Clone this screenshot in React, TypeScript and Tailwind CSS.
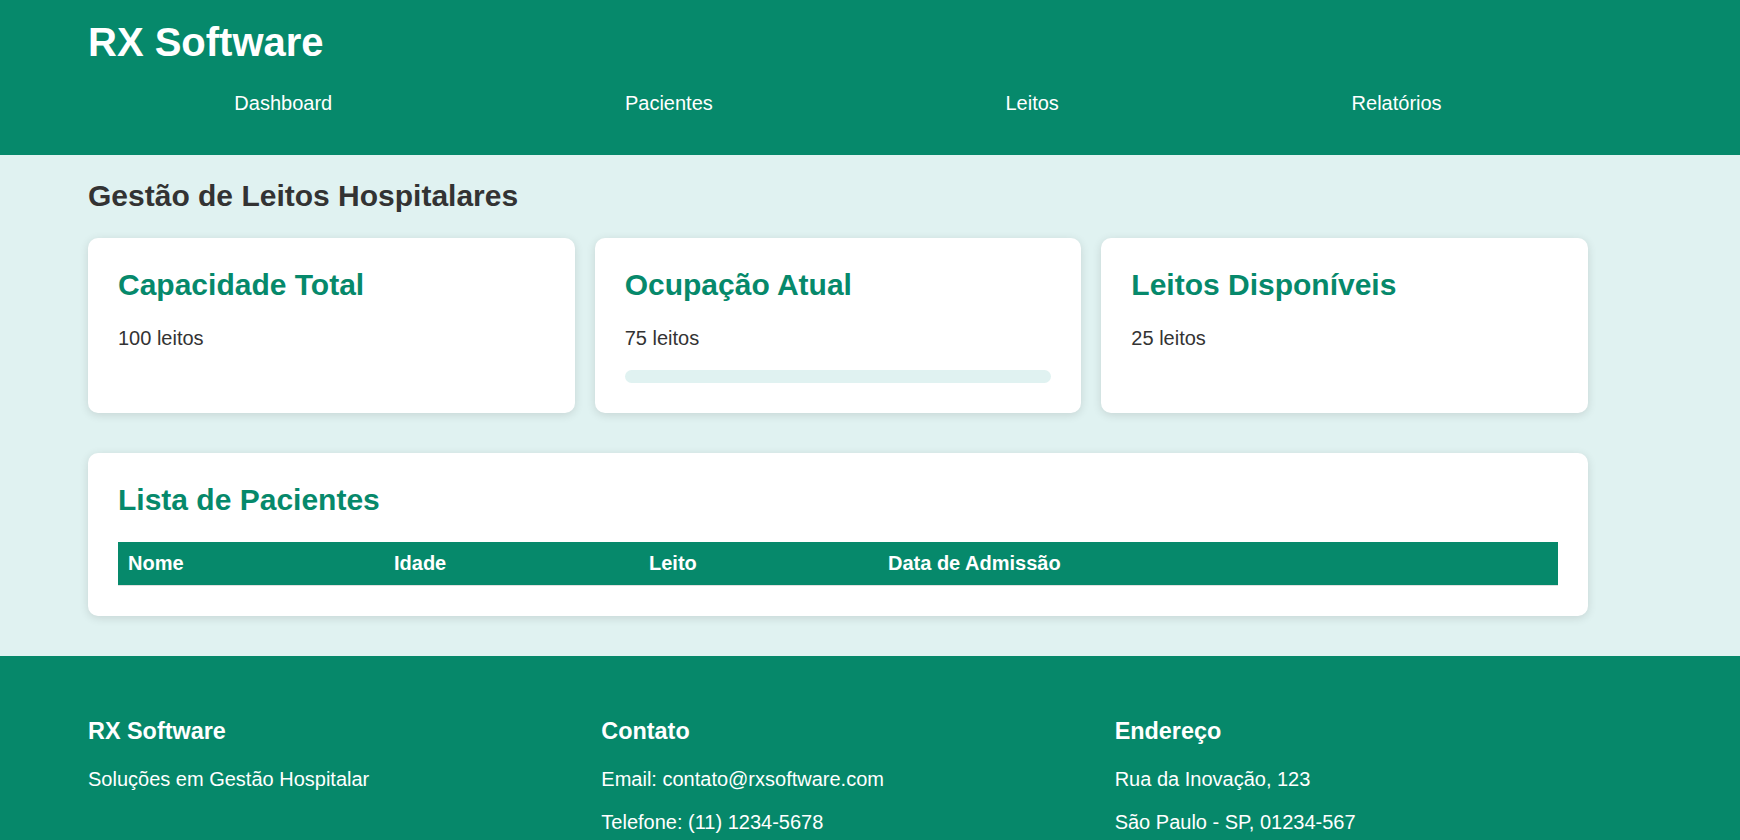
import React from 'react';

const GREEN = 'text-[#06896b]';

function StatCard({ title, value, bar }: { title: string; value: string; bar?: boolean }) {
  return (
    <div className="bg-white rounded-[10px] p-[30px] shadow-[0_2px_10px_rgba(0,0,0,0.12)]">
      <h3 className={`${GREEN} text-[30px] leading-[34.5px] font-bold mb-[24px]`}>{title}</h3>
      <p className="text-[#333] text-[20px] leading-[23px]">{value}</p>
      {bar && <div className="mt-[20px] h-[13px] rounded-full bg-[#e0f2f1]" />}
    </div>
  );
}

export default function App() {
  const nav = ['Dashboard', 'Pacientes', 'Leitos', 'Relatórios'];

  return (
    <div className="min-h-screen bg-[#e0f2f1] font-['Liberation_Sans',Arial,sans-serif]">
      <header className="bg-[#06896b] text-white pt-[19px] pb-[40px]">
        <div className="w-[1500px] ml-[88px]">
          <h1 className="text-[40px] leading-[46px] font-bold">RX Software</h1>
          <nav className="mt-[27px] flex justify-around text-[20px] leading-[23px]">
            {nav.map((item) => (
              <a key={item} href="#" className="text-white">
                {item}
              </a>
            ))}
          </nav>
        </div>
      </header>

      <main className="pt-[23px] pb-[40px]">
        <div className="w-[1500px] ml-[88px]">
          <h2 className="text-[#333] text-[30px] leading-[35px] font-bold mb-[25px]">
            Gestão de Leitos Hospitalares
          </h2>

          <div className="grid grid-cols-3 gap-[20px]">
            <StatCard title="Capacidade Total" value="100 leitos" />
            <StatCard title="Ocupação Atual" value="75 leitos" bar />
            <StatCard title="Leitos Disponíveis" value="25 leitos" />
          </div>

          <div className="mt-[40px] bg-white rounded-[10px] p-[30px] shadow-[0_2px_10px_rgba(0,0,0,0.12)]">
            <h3 className={`${GREEN} text-[30px] leading-[34.5px] font-bold mb-[25px]`}>Lista de Pacientes</h3>
            <table className="w-full border-collapse text-left text-[20px] leading-[23px]">
              <thead>
                <tr className="bg-[#06896b] text-white">
                  <th className="w-[266px] px-[10px] py-[10px] font-bold border-b border-[#e0e0e0]">Nome</th>
                  <th className="w-[255px] px-[10px] py-[10px] font-bold border-b border-[#e0e0e0]">Idade</th>
                  <th className="w-[239px] px-[10px] py-[10px] font-bold border-b border-[#e0e0e0]">Leito</th>
                  <th className="px-[10px] py-[10px] font-bold border-b border-[#e0e0e0]">Data de Admissão</th>
                </tr>
              </thead>
              <tbody />
            </table>
          </div>
        </div>
      </main>

      <footer className="bg-[#06886a] text-white pt-[62px] pb-[40px]">
        <div className="w-[1500px] ml-[88px] grid grid-cols-3 gap-[40px] text-[20px] leading-[23px]">
          <div>
            <h3 className="text-[23.4px] leading-[27px] font-bold mb-[23.4px]">RX Software</h3>
            <p>Soluções em Gestão Hospitalar</p>
          </div>
          <div>
            <h3 className="text-[23.4px] leading-[27px] font-bold mb-[23.4px]">Contato</h3>
            <p className="mb-[20px]">Email: contato@rxsoftware.com</p>
            <p>Telefone: (11) 1234-5678</p>
          </div>
          <div>
            <h3 className="text-[23.4px] leading-[27px] font-bold mb-[23.4px]">Endereço</h3>
            <p className="mb-[20px]">Rua da Inovação, 123</p>
            <p>São Paulo - SP, 01234-567</p>
          </div>
        </div>
      </footer>
    </div>
  );
}
